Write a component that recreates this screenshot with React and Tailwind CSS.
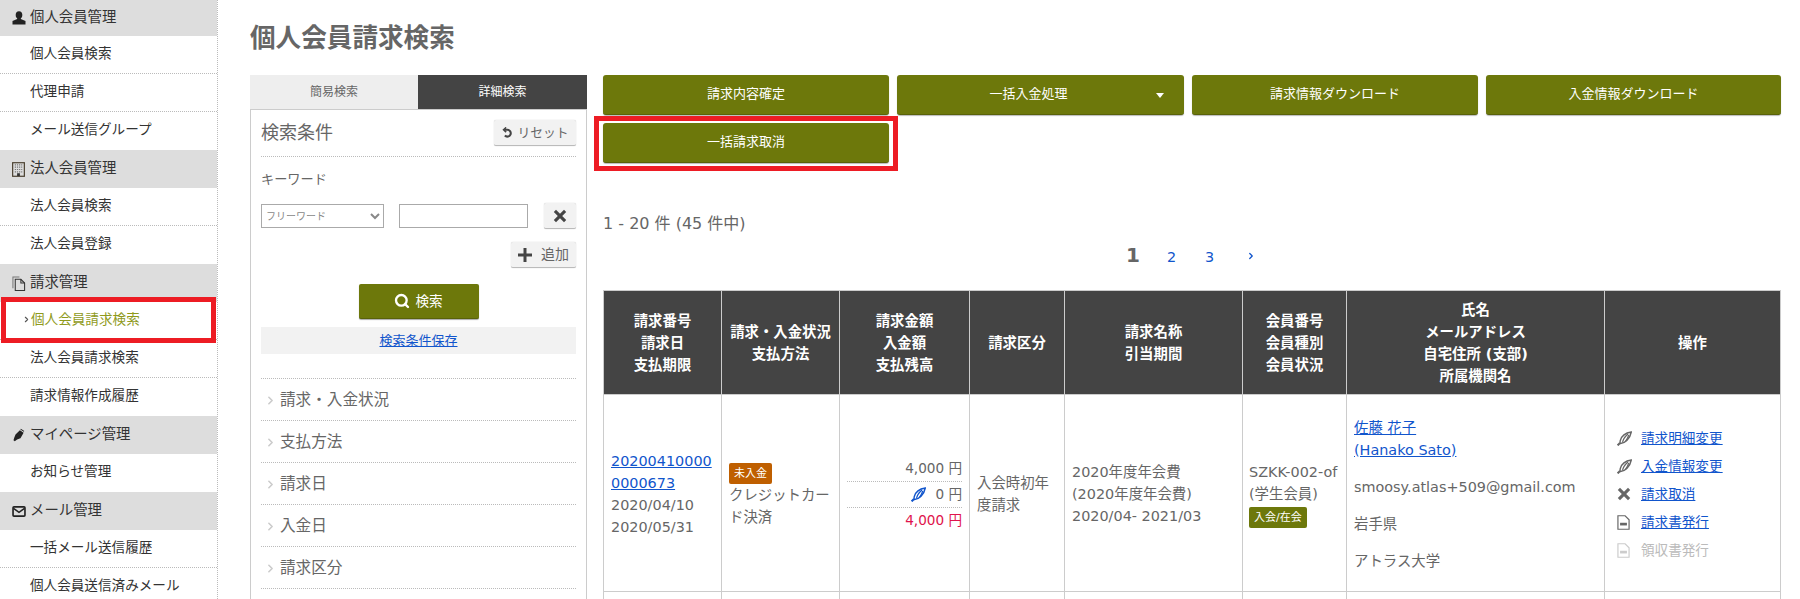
import React from 'react';
import { ChevronRight, Search } from 'lucide-react';

const PersonIcon = () => (
  <svg viewBox="0 0 14 14" className="w-[14px] h-[14px]" fill="#222">
    <ellipse cx="7" cy="4" rx="3.300" ry="3.800" />
    <path d="M5.200 6.500h3.600v1.500l4.700 2V13.500H.5V10l4.700-2z" />
  </svg>
);

const BuildingIcon = () => (
  <svg viewBox="0 0 14 16" className="w-[13px] h-[15px]">
    <rect x="0.700" y="0.700" width="12.600" height="14.600" fill="#ddd" stroke="#4a4030" strokeWidth="1.300" />
    <path d="M3 3h8M3 5.500h8M3 8h8M3 10.500h8" stroke="#777" strokeWidth="1.300" strokeDasharray="1.300 1" />
    <rect x="5.500" y="12" width="3" height="3" fill="#333" />
  </svg>
);

const FilesIcon = () => (
  <svg viewBox="0 0 15 16" className="w-[14px] h-[15px]" fill="#ddd" stroke="#333" strokeWidth="1.100">
    <path d="M1 13V1h7" fill="none" stroke="#777" />
    <path d="M3.500 3.500h6l4 4v8h-10z" />
    <path d="M9.500 3.500v4h4" fill="none" />
  </svg>
);

const PenIcon = () => (
  <svg viewBox="0 0 14 14" className="w-[13px] h-[14px]" fill="#222">
    <path d="M8.500 2l4 2.600-3.400 5.800-3.600 1.400L3 13.600l-1.400-.9L2.400 10 3.800 6.500z" />
    <path d="M9.500.3l3.700 2.400-.5.8-3.700-2.400z" />
  </svg>
);

const MailIcon = () => (
  <svg viewBox="0 0 15 12" className="w-[14px] h-[11px]" fill="none" stroke="#222">
    <rect x="1" y="1" width="13" height="10" rx="1" strokeWidth="1.800" />
    <path d="M1.500 2.500l6 4.500 6-4.500" strokeWidth="1.600" />
  </svg>
);

// solid glyph style icons, lucide ones come out too thin
const SolidX = ({ className, color = '#444' }) => (
  <svg viewBox="0 0 14 14" className={className} fill={color}>
    <path d="M3 .8L7 4.800 11 .8 13.200 3 9.200 7l4 4-2.200 2.200-4-4-4 4L.8 11l4-4-4-4z" />
  </svg>
);

const SolidPlus = ({ className }) => (
  <svg viewBox="0 0 14 14" className={className} fill="#444">
    <path d="M5.500 0h3v5.500H14v3H8.500V14h-3V8.500H0v-3h5.500z" />
  </svg>
);

const ResetIcon = () => (
  <svg viewBox="0 0 14 14" className="w-[12px] h-[12px]" fill="none" stroke="#444" strokeWidth="2.400">
    <path d="M4 3.200h3.500a4 4 0 1 1-3 6.800" />
    <path d="M6 .5L3 3.200 6 6" strokeWidth="1.800" />
  </svg>
);

// the feather shaped edit icon used in the table
const QuillIcon = ({ color = '#666' }) => (
  <svg viewBox="0 0 15 15" className="w-[15px] h-[15px]" fill="none" stroke={color} strokeWidth="1.400">
    <path d="M.6 14.400L3 12" strokeWidth="2" />
    <path d="M3 12.500c5 .3 10-5 11.300-11.500C9 1.800 4.500 5 3.300 9.500c-.3 1.200-.3 2-.3 3" />
    <path d="M5.500 11.500c.6-3.500 2.500-6 5.500-8.500M8.500 10.300c1.300-1.800 2.500-3.800 3.300-6.300" strokeWidth="1.200" />
  </svg>
);

const DocIcon = ({ color = '#666' }) => (
  <svg viewBox="0 0 12 14" className="w-[13px] h-[15px]" fill="none" stroke={color} strokeWidth="1.100">
    <path d="M.8.7h6.700L11.200 4.400v8.900H.8z" />
    <path d="M2.800 8.500h6.400" strokeWidth="2.500" />
  </svg>
);

const menu = [
  { title: '個人会員管理', icon: <PersonIcon />, h: 'h-[36px]', items: ['個人会員検索', '代理申請', 'メール送信グループ'] },
  { title: '法人会員管理', icon: <BuildingIcon />, items: ['法人会員検索', '法人会員登録'] },
  { title: '請求管理', icon: <FilesIcon />, items: ['個人会員請求検索', '法人会員請求検索', '請求情報作成履歴'] },
  { title: 'マイページ管理', icon: <PenIcon />, items: ['お知らせ管理'] },
  { title: 'メール管理', icon: <MailIcon />, items: ['一括メール送信履歴', '個人会員送信済みメール'] },
];

const Sidebar = () => (
  <div className="relative w-[218px] shrink-0 border-r border-dotted border-[#bbb] text-[#333]">
    {menu.map(group => (
      <div key={group.title}>
        <div className={`${group.h || 'h-[38px]'} bg-[#ddd] flex items-center pl-[12px] text-[14.400px]`}>
          <span className="w-[18px] flex justify-start">{group.icon}</span>
          {group.title}
        </div>
        {group.items.map(item => {
          const active = item === '個人会員請求検索';
          return (
            <div
              key={item}
              className={`h-[38px] flex items-center pb-[3px] text-[13.600px] border-b border-dotted border-[#bbb] last:border-b-0 ${active ? 'pl-[22px] text-[#8f9a1c]' : 'pl-[30px]'}`}
            >
              {active && <ChevronRight className="w-[9px] h-[9px] text-[#555]" strokeWidth={3} />}
              {item}
            </div>
          );
        })}
      </div>
    ))}
    {/* red annotation box */}
    <div className="absolute left-[1px] top-[297px] w-[215px] h-[46px] border-[5px] border-[#ed1c24]" />
  </div>
);

const GrayButton = ({ className, children }) => (
  <button className={`h-[26px] flex items-center justify-center bg-[#f2f2f2] rounded-[2px] border-b border-[#bbb] shadow-[0_0_1px_#bbb] text-[#666] ${className}`}>
    {children}
  </button>
);

const accordion = ['請求・入金状況', '支払方法', '請求日', '入金日', '請求区分'];

const SearchPanel = () => (
  <div className="w-[337px] shrink-0 flex flex-col">
    <div className="flex h-[34px] text-[12px]">
      <div className="w-[168px] bg-[#eee] text-[#666] flex items-center justify-center">簡易検索</div>
      <div className="flex-1 bg-[#444] text-white flex items-center justify-center">詳細検索</div>
    </div>
    <div className="flex-1 border-x border-[#ccc] border-t px-[10px] text-[#666]">
      <div className="flex items-center justify-between h-[47px] border-b border-dotted border-[#bbb]">
        <span className="text-[18px] pb-[1px]">検索条件</span>
        <GrayButton className="w-[82px] text-[12.800px] gap-[4px]">
          <ResetIcon />
          リセット
        </GrayButton>
      </div>
      <div className="text-[13.200px] mt-[13px] leading-[20px]">キーワード</div>
      <div className="flex items-center mt-[13px]">
        <select className="w-[123px] h-[24px] border border-[#aaa] bg-white text-[10px] text-[#888] outline-none">
          <option>フリーワード</option>
        </select>
        <input className="w-[129px] h-[24px] ml-[15px] border border-[#aaa] bg-white" />
        <GrayButton className="w-[32px] ml-auto">
          <SolidX className="w-[14px] h-[14px]" />
        </GrayButton>
      </div>
      <div className="flex justify-end mt-[13px]">
        <GrayButton className="w-[65px] gap-[9px] text-[14px]">
          <SolidPlus className="w-[14px] h-[14px]" />
          追加
        </GrayButton>
      </div>
      <div className="flex justify-center mt-[16px]">
        <button className="w-[120px] h-[35px] bg-[#6d780b] rounded-[2px] border-b border-[#59620a] shadow-[0_1px_1px_#aaa] text-white text-[13.600px] flex items-center justify-center gap-[5px]">
          <Search className="w-[16px] h-[16px]" strokeWidth={3.500} />
          検索
        </button>
      </div>
      <div className="mt-[8px] h-[27px] bg-[#f2f2f2] flex items-center justify-center text-[13px] text-[#1155cc] underline">検索条件保存</div>
      <div className="mt-[24px] border-t border-dotted border-[#bbb]">
        {accordion.map(label => (
          <div key={label} className="h-[42px] flex items-center border-b border-dotted border-[#bbb] pl-[3px] pt-[2px] text-[15.600px]">
            <ChevronRight className="w-[13px] h-[13px] text-[#ccc] mr-[3px]" strokeWidth={3} />
            {label}
          </div>
        ))}
      </div>
    </div>
  </div>
);

const OliveButton = ({ children, caret }) => (
  <button className={`relative h-[40px] w-full pb-[1px] bg-[#6d780b] rounded-[3px] border-b border-[#59620a] shadow-[0_1px_1px_#bbb] text-white text-[13px] ${caret ? 'pr-[24px]' : ''}`}>
    {children}
    {caret && <span className="absolute right-[20px] top-[18px] border-x-[4px] border-x-transparent border-t-[5px] border-t-white" />}
  </button>
);

const headers = [
  ['請求番号', '請求日', '支払期限'],
  ['請求・入金状況', '支払方法'],
  ['請求金額', '入金額', '支払残高'],
  ['請求区分'],
  ['請求名称', '引当期間'],
  ['会員番号', '会員種別', '会員状況'],
  ['氏名', 'メールアドレス', '自宅住所 (支部)', '所属機関名'],
  ['操作'],
];

const colWidths = [118, 118, 130, 95, 178, 104, 258, 176];

const actions = [
  { label: '請求明細変更', icon: <QuillIcon /> },
  { label: '入金情報変更', icon: <QuillIcon /> },
  { label: '請求取消', icon: <SolidX className="w-[14px] h-[14px]" color="#666" /> },
  { label: '請求書発行', icon: <DocIcon /> },
  { label: '領収書発行', icon: <DocIcon color="#ccc" />, disabled: true },
];

const cell = 'border border-[#ccc] px-[7px] pt-[2px] align-middle';

const BillingTable = () => (
  <table className="table-fixed border-collapse w-[1178px] text-[14.400px] leading-[22px] text-[#666]">
    <colgroup>
      {colWidths.map((w, i) => <col key={i} style={{ width: w }} />)}
    </colgroup>
    <thead>
      <tr className="h-[104px] bg-[#444] text-white">
        {headers.map((lines, i) => (
          <th key={i} className="border border-[#ccc] px-0 text-[14.400px] font-bold text-center">
            {lines.map(l => <div key={l}>{l}</div>)}
          </th>
        ))}
      </tr>
    </thead>
    <tbody>
      <tr className="h-[197px]">
        <td className={cell}>
          <a className="text-[#1155cc] underline break-all">202004100000000673</a>
          <div>2020/04/10</div>
          <div>2020/05/31</div>
        </td>
        <td className={cell}>
          <span className="inline-block bg-[#bf5f00] text-white text-[11px] leading-[21px] px-[5px] rounded-[2px]">未入金</span>
          <div>クレジットカード決済</div>
        </td>
        <td className={cell}>
          <div className="text-right text-[13.600px] leading-[25px]">
            <div className="border-b border-dotted border-[#bbb]">4,000 円</div>
            <div className="border-b border-dotted border-[#bbb] flex items-center justify-end gap-[9px]">
              <QuillIcon color="#1155cc" />0 円
            </div>
            <div className="text-[#e0144c]">4,000 円</div>
          </div>
        </td>
        <td className={cell}>入会時初年度請求</td>
        <td className={cell}>
          <div>2020年度年会費</div>
          <div>(2020年度年会費)</div>
          <div>2020/04- 2021/03</div>
        </td>
        <td className={`${cell} !px-[6px]`}>
          <div>SZKK-002-of</div>
          <div>(学生会員)</div>
          <span className="inline-block bg-[#6d780b] text-white text-[11px] leading-[21px] px-[5px] rounded-[2px]">入会/在会</span>
        </td>
        <td className={cell}>
          <div className="text-[#1155cc] underline">佐藤 花子</div>
          <div className="text-[#1155cc] underline">(Hanako Sato)</div>
          <div className="mt-[15px]">smoosy.atlas+509@gmail.com</div>
          <div className="mt-[15px]">岩手県</div>
          <div className="mt-[15px]">アトラス大学</div>
        </td>
        <td className={`${cell} !pl-[12px]`}>
          {actions.map(a => (
            <div key={a.label} className="h-[28px] flex items-center text-[13.600px]">
              <span className="w-[24px] shrink-0">{a.icon}</span>
              <span className={a.disabled ? 'text-[#bbb]' : 'text-[#1155cc] underline'}>{a.label}</span>
            </div>
          ))}
        </td>
      </tr>
      <tr className="h-[20px]">
        {colWidths.map((w, i) => <td key={i} className={cell} />)}
      </tr>
    </tbody>
  </table>
);

const App = () => (
  <div className="h-[599px] w-[1800px] overflow-hidden flex bg-white font-['DejaVu_Sans','Noto_Sans_CJK_JP',sans-serif]">
    <Sidebar />
    <div className="flex-1 min-w-0 pl-[32px] flex flex-col">
      <h1 className="h-[75px] pt-[20px] text-[25.600px] leading-[36px] font-bold text-[#666]">個人会員請求検索</h1>
      <div className="flex-1 flex gap-[16px] min-h-0">
        <SearchPanel />
        <div className="flex-1 min-w-0">
          <div className="grid grid-cols-[286px_287px_286px_295px] gap-[8px]">
            <OliveButton>請求内容確定</OliveButton>
            <OliveButton caret>一括入金処理</OliveButton>
            <OliveButton>請求情報ダウンロード</OliveButton>
            <OliveButton>入金情報ダウンロード</OliveButton>
            <div className="relative">
              <OliveButton>一括請求取消</OliveButton>
              {/* red annotation box */}
              <div className="absolute -left-[9px] -right-[9px] -top-[7px] -bottom-[8px] border-[5px] border-[#ed1c24]" />
            </div>
          </div>
          <div className="mt-[50px] text-[16px] leading-[22px] text-[#666]">1 - 20 件 (45 件中)</div>
          <div className="relative h-[55px]">
            <div className="absolute left-[523px] top-[6px] text-[20px] leading-[28px] font-bold text-[#666]">1</div>
            <div className="absolute left-[564px] top-[11px] text-[14.400px] leading-[22px] text-[#1155cc]">2</div>
            <div className="absolute left-[602px] top-[11px] text-[14.400px] leading-[22px] text-[#1155cc]">3</div>
            <ChevronRight className="absolute left-[643px] top-[16px] w-[10px] h-[10px] text-[#1155cc]" strokeWidth={3} />
          </div>
          <BillingTable />
        </div>
      </div>
    </div>
  </div>
);

export default App;
